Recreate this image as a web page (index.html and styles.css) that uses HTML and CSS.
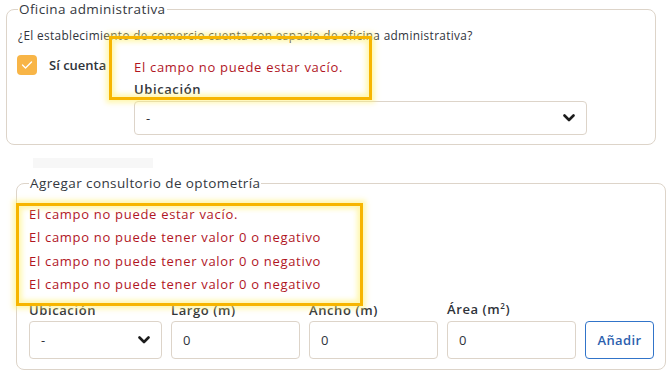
FILE: index.html
```html
<html>
<head>
  <title>Consultorio</title>
  <meta charset="UTF-8">
  <link rel="stylesheet" href="styles.css">
</head>
<body>
  <fieldset class="box office">
    <legend>Oficina administrativa</legend>
    <div class="question">¿El establecimiento de comercio cuenta con espacio de oficina administrativa?</div>
    <div class="office-row">
      <label class="check">
        <span class="tick">
          <svg width="12" height="10" viewBox="0 0 12 10"><polyline points="1.5,5 4.5,8 10.5,2" fill="none" stroke="#fff" stroke-width="1.4" stroke-linecap="round" stroke-linejoin="round"/></svg>
        </span>
        Sí cuenta
      </label>
      <div class="office-place">
        <div class="err">El campo no puede estar vacío.</div>
        <div class="lbl">Ubicación</div>
        <div class="select wide">
          <span>-</span>
          <svg width="12" height="8" viewBox="0 0 12 8"><polyline points="1.5,1.5 6,6 10.5,1.5" fill="none" stroke="#1c1c1c" stroke-width="2.6" stroke-linecap="round" stroke-linejoin="round"/></svg>
        </div>
        <div class="mark mark-office"></div>
      </div>
    </div>
  </fieldset>

  <div class="ghost"></div>

  <fieldset class="box room">
    <legend>Agregar consultorio de optometría</legend>
    <div class="errors">
      <div class="err">El campo no puede estar vacío.</div>
      <div class="err">El campo no puede tener valor 0 o negativo</div>
      <div class="err">El campo no puede tener valor 0 o negativo</div>
      <div class="err">El campo no puede tener valor 0 o negativo</div>
      <div class="mark mark-room"></div>
    </div>
    <div class="fields">
      <div class="field f-place">
        <div class="lbl">Ubicación</div>
        <div class="select">
          <span>-</span>
          <svg width="12" height="8" viewBox="0 0 12 8"><polyline points="1.5,1.5 6,6 10.5,1.5" fill="none" stroke="#1c1c1c" stroke-width="2.6" stroke-linecap="round" stroke-linejoin="round"/></svg>
        </div>
      </div>
      <div class="field">
        <div class="lbl">Largo (m)</div>
        <div class="input">0</div>
      </div>
      <div class="field">
        <div class="lbl">Ancho (m)</div>
        <div class="input">0</div>
      </div>
      <div class="field">
        <div class="lbl">Área (m<sup>2</sup>)</div>
        <div class="input">0</div>
      </div>
      <button class="add">Añadir</button>
    </div>
  </fieldset>
</body>
</html>
```
FILE: styles.css
```css
body{
  margin: 0;
  background-color: #fff;
  color: #2f333a;
  font-family: "Open Sans", "Lato", sans-serif;
  font-size: 13px;
}
.box{
  width: 650px;
  box-sizing: border-box;
  border: 1px solid #ddd4c9;
  border-radius: 8px;
  margin: 0;
}
.box legend{
  font-size: 13.5px;
  line-height: 18px;
  font-weight: 500;
  letter-spacing: 0.4px;
  padding: 0 1px;
  color: #343840;
}
.office{
  margin-left: 6px;
  padding: 10px 11px 9px 11px;
}
.question{
  font-size: 11.8px;
  line-height: 14px;
  color: #30343c;
  letter-spacing: 0.35px;
}
.office-row{
  display: flex;
  margin-top: 12px;
}
.check{
  width: 117px;
  display: flex;
  align-items: center;
  gap: 12px;
  height: 21px;
  font-weight: 600;
  margin-left: -1px;
}
.tick{
  width: 20px;
  height: 20px;
  border-radius: 4px;
  background-color: #f8b547;
  display: flex;
  align-items: center;
  justify-content: center;
}
.office-place{
  position: relative;
  width: 453px;
  margin-top: 3px;
}
.err{
  color: #b1161f;
  line-height: 20px;
  letter-spacing: 0.7px;
}
.errors .err{
  line-height: 23.3px;
}
.lbl{
  font-weight: 600;
  line-height: 20px;
  letter-spacing: 0.6px;
  color: #2f333a;
}
.office-place .lbl{
  margin-top: 2px;
}
.select, .input{
  box-sizing: border-box;
  height: 38px;
  border: 1px solid #ddd4c9;
  border-radius: 4px;
  display: flex;
  align-items: center;
  padding: 0 11px;
  background-color: #fff;
}
.select{
  justify-content: space-between;
}
.select.wide{
  height: 34px;
  margin-top: 2px;
}
.mark{
  position: absolute;
  border: 3px solid #f7b500;
  box-shadow: 0 0 5px 3px rgba(255, 240, 110, 0.55), inset 0 0 5px 3px rgba(255, 240, 110, 0.55);
  pointer-events: none;
}
.mark-office{
  left: -25px;
  top: -21px;
  width: 257px;
  height: 58px;
}
.ghost{
  width: 120px;
  height: 10px;
  margin: 13px 0 6px 33px;
  background-color: #f7f7f7;
}
.room{
  margin-left: 16px;
  padding: 11px 11px 10px 12px;
}
.errors{
  position: relative;
}
.mark-room{
  left: -13px;
  top: 0;
  width: 341px;
  height: 97px;
  z-index: 2;
}
.fields{
  display: flex;
  align-items: flex-end;
  gap: 9px;
  margin-top: 2px;
}
.field{
  width: 129px;
}
.field.f-place{
  width: 133px;
}
.field .lbl{
  line-height: 16px;
  margin-bottom: 3px;
}
.lbl sup{
  font-size: 8px;
}
.add{
  width: 69px;
  height: 38px;
  border: 1px solid #3174c9;
  border-radius: 4px;
  background-color: #fff;
  color: #2c5fae;
  font-family: inherit;
  font-size: 13px;
  font-weight: 600;
  letter-spacing: 0.4px;
}
```
